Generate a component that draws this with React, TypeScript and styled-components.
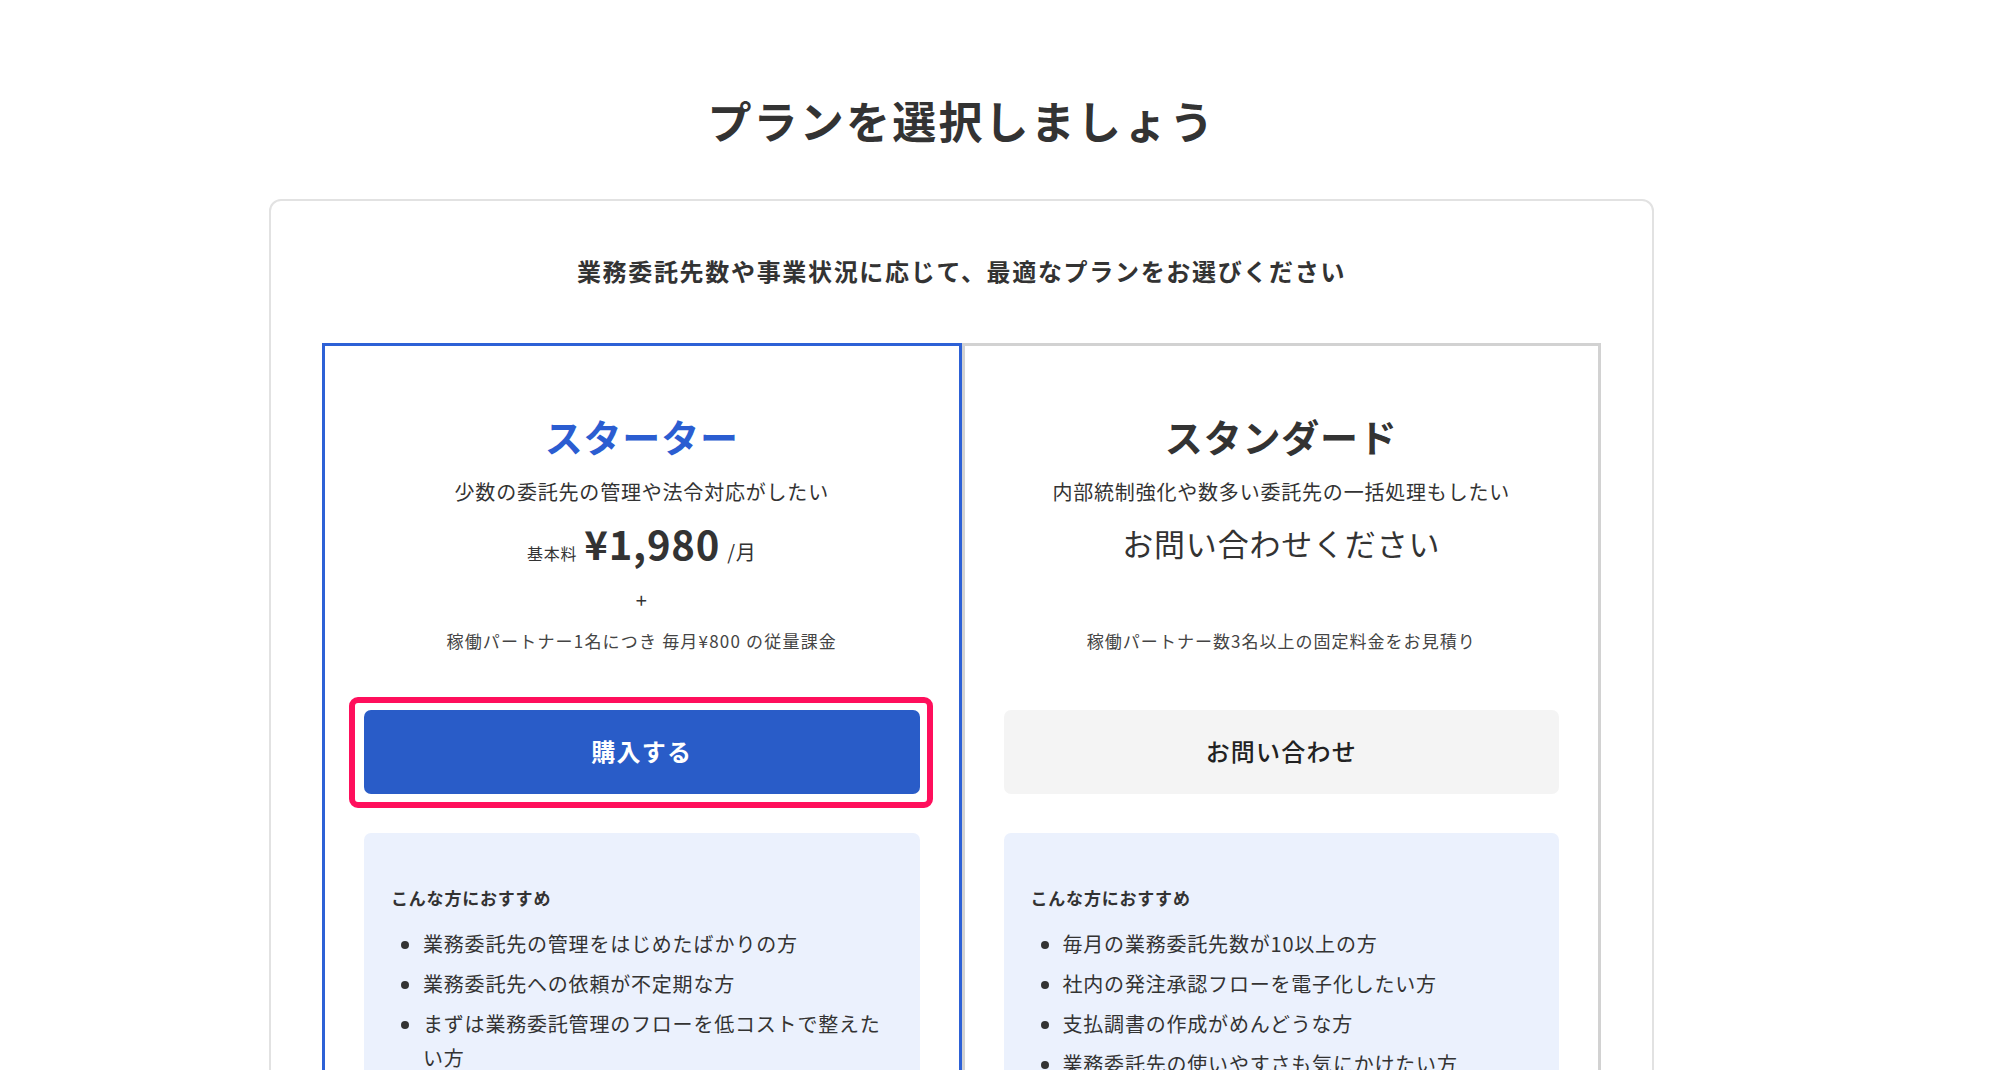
import React from "react";
import styled, { createGlobalStyle } from "styled-components";

const GlobalStyle = createGlobalStyle`
  html, body {
    margin: 0;
    padding: 0;
    background: #ffffff;
  }
  body {
    font-family: "Noto Sans CJK JP", "Noto Sans", "Liberation Sans", sans-serif;
    color: #333333;
    letter-spacing: 0.05em;
  }
  * { box-sizing: border-box; }
`;

const Page = styled.main`
  display: flex;
  flex-direction: column;
  align-items: center;
  padding: 0 75px 0 0;
`;

const Heading = styled.h1`
  margin: 87px 0 0;
  font-size: 44px;
  line-height: 66px;
  font-weight: 700;
  letter-spacing: 0.05em;
  color: #333333;
  text-align: center;
`;

const Panel = styled.section`
  margin-top: 46px;
  width: 1385px;
  border: 2px solid #e2e2e2;
  border-radius: 12px;
  padding: 52px 51px 0;
`;

const Lead = styled.p`
  margin: 0;
  font-size: 24px;
  line-height: 36px;
  font-weight: 700;
  letter-spacing: 0.07em;
  text-align: center;
  color: #333333;
`;

const PlanGrid = styled.div`
  margin-top: 54px;
  display: grid;
  grid-template-columns: 1fr 1fr;
`;

const PlanCard = styled.article<{ $selected?: boolean }>`
  display: flex;
  flex-direction: column;
  align-items: stretch;
  border: 3px solid ${(p) => (p.$selected ? "#2d61d6" : "#d2d2d2")};
  padding: 61px 39px 40px;
  text-align: center;
`;

const PlanName = styled.h2<{ $accent?: boolean }>`
  margin: 0;
  font-size: 38px;
  line-height: 57px;
  font-weight: 700;
  color: ${(p) => (p.$accent ? "#2b5dd1" : "#333333")};
`;

const PlanDesc = styled.p`
  margin: 13px 0 0;
  font-size: 20px;
  line-height: 30px;
  color: #333333;
`;

const PriceLine = styled.div`
  margin-top: 8px;
  height: 56px;
  display: flex;
  align-items: baseline;
  justify-content: center;
  line-height: 56px;
  gap: 7px;
`;

const PriceLabel = styled.span`
  font-size: 16px;
  color: #333333;
`;

const PriceValue = styled.span`
  font-size: 40px;
  font-weight: 700;
  color: #333333;
  letter-spacing: 0.02em;
`;

const PriceUnit = styled.span`
  font-size: 20px;
  color: #333333;
`;

const ContactPrice = styled.span`
  font-size: 31px;
  color: #333333;
`;

const Plus = styled.div<{ $hidden?: boolean }>`
  margin-top: 14px;
  font-size: 20px;
  line-height: 30px;
  color: #333333;
  visibility: ${(p) => (p.$hidden ? "hidden" : "visible")};
`;

const Note = styled.p<{ $wide?: boolean }>`
  margin: 13px 0 0;
  font-size: 17px;
  line-height: 26px;
  letter-spacing: ${(p) => (p.$wide ? "0.07em" : "0.06em")};
  color: #444444;
`;

const ButtonWrap = styled.div`
  position: relative;
  margin-top: 56px;
`;

const Highlight = styled.span`
  position: absolute;
  top: -13px;
  bottom: -14px;
  left: -15px;
  right: -13px;
  border: 6px solid #ff0f5c;
  border-radius: 9px;
  pointer-events: none;
`;

const PlanButton = styled.button<{ $primary?: boolean }>`
  display: block;
  width: 100%;
  height: 84px;
  border: none;
  border-radius: 7px;
  padding: 0 0 4px;
  font-family: inherit;
  letter-spacing: 0.05em;
  font-size: 24px;
  font-weight: ${(p) => (p.$primary ? 700 : 500)};
  color: ${(p) => (p.$primary ? "#ffffff" : "#222222")};
  background: ${(p) => (p.$primary ? "#295cc8" : "#f4f4f4")};
  cursor: pointer;
`;

const RecommendBox = styled.div`
  margin-top: 39px;
  background: #ebf1fd;
  border-radius: 7px;
  padding: 53px 27px 40px;
  text-align: left;
`;

const RecommendTitle = styled.h3`
  margin: 0;
  font-size: 17px;
  line-height: 24px;
  font-weight: 700;
  color: #333333;
`;

const RecommendList = styled.ul`
  margin: 17px 0 0;
  padding: 0 0 0 32px;
  list-style: disc;
`;

const RecommendItem = styled.li`
  font-size: 20px;
  line-height: 34px;
  color: #333333;
  & + & {
    margin-top: 6px;
  }
`;

type Plan = {
  name: string;
  desc: string;
  selected?: boolean;
  note: string;
  button: string;
  items: string[];
};

const plans: Plan[] = [
  {
    name: "スターター",
    desc: "少数の委託先の管理や法令対応がしたい",
    selected: true,
    note: "稼働パートナー1名につき 毎月¥800 の従量課金",
    button: "購入する",
    items: [
      "業務委託先の管理をはじめたばかりの方",
      "業務委託先への依頼が不定期な方",
      "まずは業務委託管理のフローを低コストで整えたい方",
    ],
  },
  {
    name: "スタンダード",
    desc: "内部統制強化や数多い委託先の一括処理もしたい",
    note: "稼働パートナー数3名以上の固定料金をお見積り",
    button: "お問い合わせ",
    items: [
      "毎月の業務委託先数が10以上の方",
      "社内の発注承認フローを電子化したい方",
      "支払調書の作成がめんどうな方",
      "業務委託先の使いやすさも気にかけたい方",
    ],
  },
];

function PlanColumn({ plan }: { plan: Plan }) {
  return (
    <PlanCard $selected={plan.selected}>
      <PlanName $accent={plan.selected}>{plan.name}</PlanName>
      <PlanDesc>{plan.desc}</PlanDesc>
      <PriceLine>
        {plan.selected ? (
          <>
            <PriceLabel>基本料</PriceLabel>
            <PriceValue>¥1,980</PriceValue>
            <PriceUnit>/月</PriceUnit>
          </>
        ) : (
          <ContactPrice>お問い合わせください</ContactPrice>
        )}
      </PriceLine>
      <Plus $hidden={!plan.selected}>+</Plus>
      <Note $wide={plan.selected}>{plan.note}</Note>
      <ButtonWrap>
        <PlanButton $primary={plan.selected}>{plan.button}</PlanButton>
        {plan.selected && <Highlight />}
      </ButtonWrap>
      <RecommendBox>
        <RecommendTitle>こんな方におすすめ</RecommendTitle>
        <RecommendList>
          {plan.items.map((item) => (
            <RecommendItem key={item}>{item}</RecommendItem>
          ))}
        </RecommendList>
      </RecommendBox>
    </PlanCard>
  );
}

export default function App() {
  return (
    <>
      <GlobalStyle />
      <Page>
        <Heading>プランを選択しましょう</Heading>
        <Panel>
          <Lead>業務委託先数や事業状況に応じて、最適なプランをお選びください</Lead>
          <PlanGrid>
            {plans.map((plan) => (
              <PlanColumn key={plan.name} plan={plan} />
            ))}
          </PlanGrid>
        </Panel>
      </Page>
    </>
  );
}
